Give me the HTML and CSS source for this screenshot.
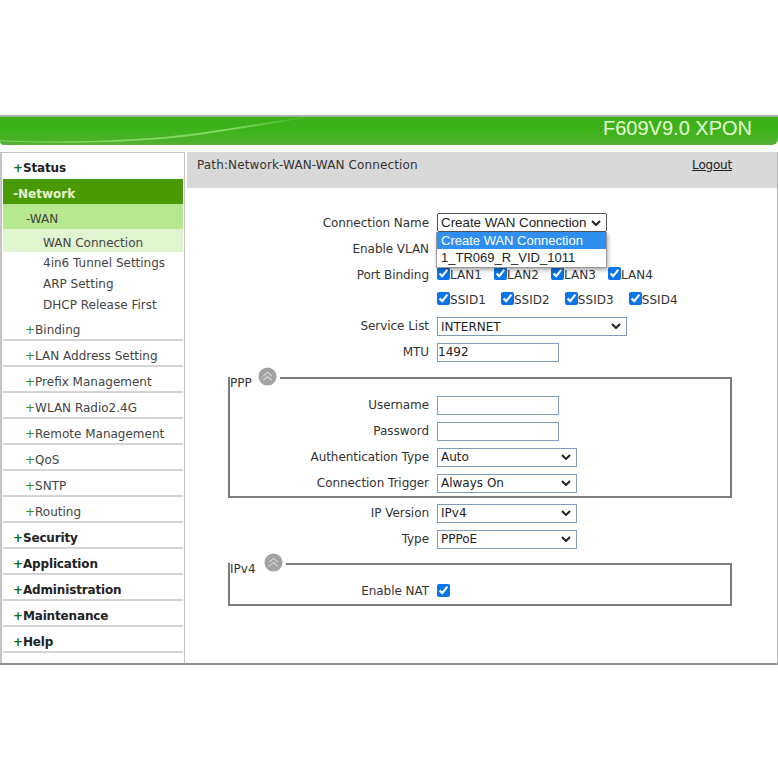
FILE: index.html
```html
<!DOCTYPE html>
<html lang="en">
<head>
<meta charset="utf-8">
<title>F609V9.0 XPON</title>
<link rel="stylesheet" href="styles.css">
</head>
<body>
<div class="page">
  <header class="banner">
    <svg class="banner-art" viewBox="0 0 778 30" preserveAspectRatio="none" aria-hidden="true">
      <defs>
        <linearGradient id="sheen" x1="0" y1="0" x2="1" y2="0">
          <stop offset="0" stop-color="#8fe070" stop-opacity=".8"/>
          <stop offset=".75" stop-color="#8fe070" stop-opacity=".8"/>
          <stop offset="1" stop-color="#8fe070" stop-opacity=".2"/>
        </linearGradient>
      </defs>
      <path d="M0 25 C60 28 140 26 200 17 C240 11 270 5 306 0 L306 1 C270 7 240 13 200 19 C140 28 60 29 0 26 Z" fill="url(#sheen)"/>
    </svg>
    <span class="model">F609V9.0 XPON</span>
  </header>
  <main class="frame">
    <nav class="side">
      <div class="top-item"><b class="plus">+</b>Status</div>
      <div class="top-item active">-Network</div>
      <div class="sub-item sub-active">-WAN</div>
      <div class="leaf leaf-active">WAN Connection</div>
      <div class="leaf">4in6 Tunnel Settings</div>
      <div class="leaf">ARP Setting</div>
      <div class="leaf">DHCP Release First</div>
      <div class="sub-item line"><span class="plus-sub">+</span>Binding</div>
      <div class="sub-item line"><span class="plus-sub">+</span>LAN Address Setting</div>
      <div class="sub-item line"><span class="plus-sub">+</span>Prefix Management</div>
      <div class="sub-item line"><span class="plus-sub">+</span>WLAN Radio2.4G</div>
      <div class="sub-item line"><span class="plus-sub">+</span>Remote Management</div>
      <div class="sub-item line"><span class="plus-sub">+</span>QoS</div>
      <div class="sub-item line"><span class="plus-sub">+</span>SNTP</div>
      <div class="sub-item line"><span class="plus-sub">+</span>Routing</div>
      <div class="top-item line"><b class="plus">+</b>Security</div>
      <div class="top-item line"><b class="plus">+</b>Application</div>
      <div class="top-item line"><b class="plus">+</b>Administration</div>
      <div class="top-item line"><b class="plus">+</b>Maintenance</div>
      <div class="top-item line"><b class="plus">+</b>Help</div>
    </nav>
    <section class="content">
      <div class="pathbar">
        <span>Path:Network-WAN-WAN Connection</span>
        <a class="logout" href="#">Logout</a>
      </div>
      <form class="form">
        <div class="row"><label class="lbl">Connection Name</label>
          <div class="ctl conn-wrap">
            <select class="sel conn"><option>Create WAN Connection</option><option>1_TR069_R_VID_1011</option></select>
            <div class="popup">
              <div class="opt opt-on">Create WAN Connection</div>
              <div class="opt">1_TR069_R_VID_1011</div>
            </div>
          </div>
        </div>
        <div class="row"><label class="lbl">Enable VLAN</label><div class="ctl"><input type="checkbox" class="chk"></div></div>
        <div class="row"><label class="lbl">Port Binding</label>
          <div class="ctl checks">
            <label class="cb"><input type="checkbox" class="chk" checked>LAN1</label>
            <label class="cb"><input type="checkbox" class="chk" checked>LAN2</label>
            <label class="cb"><input type="checkbox" class="chk" checked>LAN3</label>
            <label class="cb"><input type="checkbox" class="chk" checked>LAN4</label>
          </div>
        </div>
        <div class="row row-ssid"><span class="lbl"></span>
          <div class="ctl checks">
            <label class="cb cb-ssid"><input type="checkbox" class="chk" checked>SSID1</label>
            <label class="cb cb-ssid"><input type="checkbox" class="chk" checked>SSID2</label>
            <label class="cb cb-ssid"><input type="checkbox" class="chk" checked>SSID3</label>
            <label class="cb cb-ssid"><input type="checkbox" class="chk" checked>SSID4</label>
          </div>
        </div>
        <div class="row"><label class="lbl">Service List</label><div class="ctl"><select class="sel wide"><option>INTERNET</option></select></div></div>
        <div class="row"><label class="lbl">MTU</label><div class="ctl"><input class="txt" value="1492"></div></div>

        <fieldset class="group ppp">
          <legend class="legend"><span class="legend-text">PPP</span><svg class="fold" viewBox="0 0 20 20" aria-hidden="true"><circle cx="10" cy="10" r="9.5" fill="#a3a3a3"/><path d="M5.500 9.500 10 5.500l4.500 4M5.500 14 10 10l4.500 4" fill="none" stroke="#d2d2d2" stroke-width="1.300"/></svg></legend>
          <div class="row"><label class="lbl">Username</label><div class="ctl"><input class="txt"></div></div>
          <div class="row"><label class="lbl">Password</label><div class="ctl"><input class="txt" type="password"></div></div>
          <div class="row"><label class="lbl">Authentication Type</label><div class="ctl"><select class="sel mid"><option>Auto</option></select></div></div>
          <div class="row"><label class="lbl">Connection Trigger</label><div class="ctl"><select class="sel mid"><option>Always On</option></select></div></div>
        </fieldset>

        <div class="row row-ip"><label class="lbl">IP Version</label><div class="ctl"><select class="sel mid"><option>IPv4</option></select></div></div>
        <div class="row"><label class="lbl">Type</label><div class="ctl"><select class="sel mid"><option>PPPoE</option></select></div></div>

        <fieldset class="group ipv4">
          <legend class="legend"><span class="legend-text">IPv4</span><svg class="fold" viewBox="0 0 20 20" aria-hidden="true"><circle cx="10" cy="10" r="9.500" fill="#a3a3a3"/><path d="M5.500 9.500 10 5.500l4.500 4M5.500 14 10 10l4.500 4" fill="none" stroke="#d2d2d2" stroke-width="1.300"/></svg></legend>
          <div class="row"><label class="lbl">Enable NAT</label><div class="ctl"><input type="checkbox" class="chk" checked></div></div>
        </fieldset>
      </form>
    </section>
  </main>
</div>
</body>
</html>
```
FILE: styles.css
```css
* { box-sizing: border-box; }
html, body { margin: 0; padding: 0; background: #fff; }
body { font: 12px/1.2 "DejaVu Sans", Verdana, sans-serif; color: #333; }
.page { padding-top: 115px; width: 778px; height: 778px; overflow: hidden; }

.banner {
  position: relative;
  height: 30px;
  border-top: 2px solid #a8b4a8;
  border-radius: 0 0 6px 4px;
  background: linear-gradient(#38b016 0%, #3eb41a 50%, #4bb02a 85%, #58b038 100%);
  display: flex;
  justify-content: flex-end;
  align-items: center;
  padding: 0 26px 5px 0;
  overflow: hidden;
}
.banner-art { position: absolute; inset: 0; width: 100%; height: 100%; }
.model { position: relative; font: 20px "Liberation Sans", Arial, sans-serif; color: #e8fbd8; }

.frame {
  margin-top: 7px;
  height: 513px;
  display: flex;
  border-bottom: 2px solid #8f8f8f;
  border-right: 1px solid #b5b5b5;
}

.side {
  width: 185px;
  flex: none;
  border-left: 2px solid #c4c4c4;
  border-right: 1px solid #c4c4c4;
  border-top: 1px solid #c4c4c4;
  padding: 0 1px;
  color: #444;
}
.top-item {
  height: 26px;
  line-height: 30px;
  padding-left: 10px;
  font-weight: 700;
  letter-spacing: -.15px;
  color: #222;
}
.top-item.active {
  height: 25px;
  line-height: 31px;
  background: #4a9a06;
  color: #e8f5d0;
  letter-spacing: 0;
}
.plus { color: #0c6b1c; font-weight: 700; }
.sub-item {
  height: 26px;
  line-height: 31px;
  padding-left: 22px;
}
.sub-active { height: 25px; padding-left: 23px; background: #b6e890; }
.plus-sub { color: #3e8a1e; }
.line { border-bottom: 2px solid #d4d4d4; }
.leaf {
  height: 21px;
  line-height: 23px;
  padding-left: 40px;
}
.leaf-active { height: 23px; line-height: 28px; background: #e0f5d0; }

.content { flex: 1; margin-left: 2px; }
.pathbar {
  height: 36px;
  background: #d9d9d9;
  display: flex;
  justify-content: space-between;
  padding: 6px 45px 0 10px;
  color: #333;
  letter-spacing: .13px;
}
.logout { color: #222; text-decoration: underline; letter-spacing: -.2px; }

.form { margin: 22px 45px 0 41px; }
.row { display: flex; align-items: center; height: 26px; }
.lbl { width: 201px; text-align: right; flex: none; color: #333; letter-spacing: -.05px; }
.ctl { margin-left: 8px; display: flex; align-items: center; }
.row-ssid { height: 25px; }

.sel, .txt {
  font: 12px "DejaVu Sans", Verdana, sans-serif;
  color: #222;
  background-color: #fff;
  border: 1px solid #7f9db9;
  border-radius: 0;
  height: 19px;
  padding: 0;
  margin: 0;
}
.sel {
  appearance: none;
  padding: 0 0 0 3px;
  background-image: url("data:image/svg+xml,%3Csvg xmlns='http://www.w3.org/2000/svg' viewBox='0 0 10 6'%3E%3Cpath d='M1 1l4 4 4-4' fill='none' stroke='%23222' stroke-width='2'/%3E%3C/svg%3E");
  background-repeat: no-repeat;
  background-size: 10px 6px;
  background-position: right 5px center;
}
.txt { width: 122px; }
.wide { width: 190px; padding-top: 1px; }
.mid { width: 140px; }
.conn {
  width: 170px;
  font: 13.33px "Liberation Sans", Arial, sans-serif;
  border-color: #555;
  border-radius: 2px;
}

.conn-wrap { position: relative; margin-top: -1px; }
.popup {
  position: absolute;
  left: -1px;
  top: 19px;
  width: 171px;
  background: #fff;
  border: 1px solid #9a9a9a;
  border-top: 0;
  box-shadow: 1px 2px 4px rgba(0,0,0,.35);
  font: 13px "Liberation Sans", Arial, sans-serif;
  color: #222;
  z-index: 2;
}
.opt { height: 17px; line-height: 17px; padding-left: 4px; }
.opt-on { background: #2f8ff0; color: #fff; }
.opt + .opt { height: 18px; }

.chk { margin: 0; width: 13px; height: 13px; accent-color: #0a75e8; }
.cb { display: inline-flex; align-items: center; margin-right: 12px; height: 26px; color: #333; letter-spacing: .05px; }
.cb-ssid { margin-right: 15px; }
.cb .chk { margin-top: -4px; }

.group {
  margin: 0;
  padding: 0;
  border: 2px solid #7d7d7d;
  min-width: 0;
}
.group .row { margin-left: -2px; }
.ppp { height: 130px; margin-top: 3px; }
.ipv4 { height: 52px; margin-top: 2px; }
.legend {
  padding: 0;
  margin: 0;
  display: flex;
  align-items: flex-start;
  height: 20px;
  color: #333;
}
.legend-text { margin-top: 8px; line-height: 14px; }
.fold { width: 19px; height: 19px; margin: -1px 3px 0 6px; }
.ipv4 .fold { margin-left: 8px; }
.ppp .row:first-of-type { margin-top: 4px; }
.ipv4 .row { margin-top: 4px; }
.ipv4 .chk { margin-top: -2px; }
.row-ip { margin-top: 2px; }
```
